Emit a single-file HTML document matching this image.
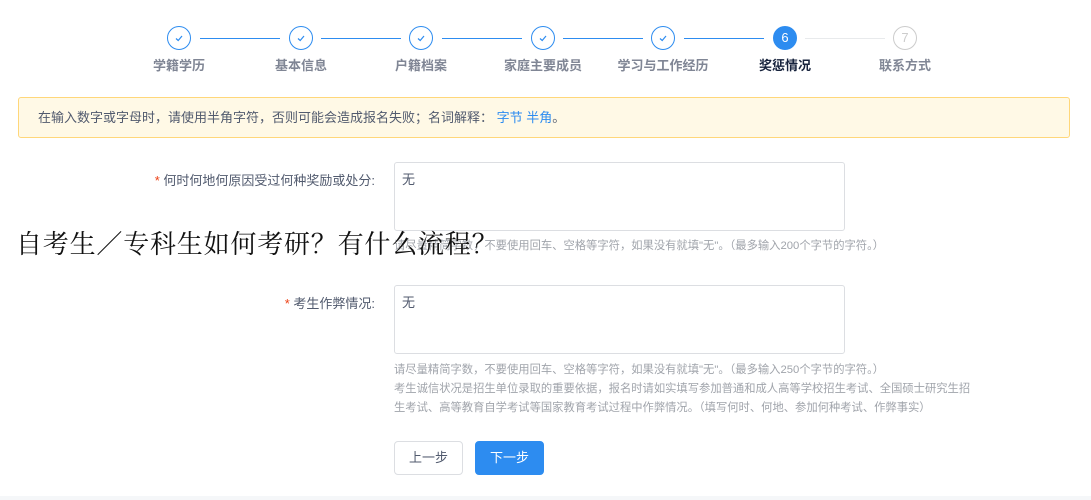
<!DOCTYPE html>
<html><head><meta charset="utf-8"><style>
*{margin:0;padding:0;box-sizing:border-box}
body{width:1091px;height:500px;background:#fff;position:relative;overflow:hidden;font-family:"Liberation Sans","Noto Sans CJK SC",sans-serif;color:#515a6e}
.a{position:absolute;white-space:nowrap}
.c{position:absolute;width:24px;height:24px;border-radius:50%;border:1px solid #2d8cf0;top:26px;color:#2d8cf0;font-size:13px;text-align:center;line-height:22px}
.c svg{position:absolute;left:6px;top:6px}
.ln{position:absolute;top:38px;height:1px;background:#2d8cf0}
.lb{position:absolute;top:55px;font-size:13px;color:#808695;width:120px;text-align:center}
.ta{position:absolute;left:394px;width:451px;border:1px solid #dcdee2;border-radius:3px;font-size:13px;padding:6px 7px;color:#515a6e}
.h{position:absolute;left:394px;font-size:11.3px;color:#a0a4ab;line-height:19px;white-space:nowrap}
.btn{position:absolute;top:441px;width:69px;height:34px;border-radius:4px;font-size:13px;text-align:center;line-height:32px}
</style></head><body>
<div class="c" style="left:167px"><svg width="10" height="10" viewBox="0 0 10 10"><path d="M2 5.5L4.2 7.5L8 3" fill="none" stroke="#2d8cf0" stroke-width="1.2"/></svg></div><div class="ln" style="left:200px;width:80px"></div>
<div class="c" style="left:289px"><svg width="10" height="10" viewBox="0 0 10 10"><path d="M2 5.5L4.2 7.5L8 3" fill="none" stroke="#2d8cf0" stroke-width="1.2"/></svg></div><div class="ln" style="left:321px;width:80px"></div>
<div class="c" style="left:409px"><svg width="10" height="10" viewBox="0 0 10 10"><path d="M2 5.5L4.2 7.5L8 3" fill="none" stroke="#2d8cf0" stroke-width="1.2"/></svg></div><div class="ln" style="left:442px;width:80px"></div>
<div class="c" style="left:531px"><svg width="10" height="10" viewBox="0 0 10 10"><path d="M2 5.5L4.2 7.5L8 3" fill="none" stroke="#2d8cf0" stroke-width="1.2"/></svg></div><div class="ln" style="left:563px;width:80px"></div>
<div class="c" style="left:651px"><svg width="10" height="10" viewBox="0 0 10 10"><path d="M2 5.5L4.2 7.5L8 3" fill="none" stroke="#2d8cf0" stroke-width="1.2"/></svg></div><div class="ln" style="left:684px;width:80px"></div>
<div class="c" style="left:773px;background:#2d8cf0;color:#fff">6</div><div class="ln" style="left:805px;width:80px;background:#e8eaec"></div>
<div class="c" style="left:893px;border-color:#ccc;color:#ccc">7</div>
<div class="lb" style="left:119px;font-weight:bold">学籍学历</div>
<div class="lb" style="left:241px;font-weight:bold">基本信息</div>
<div class="lb" style="left:361px;font-weight:bold">户籍档案</div>
<div class="lb" style="left:483px;font-weight:bold">家庭主要成员</div>
<div class="lb" style="left:603px;font-weight:bold">学习与工作经历</div>
<div class="lb" style="left:725px;color:#17233d;font-weight:bold">奖惩情况</div>
<div class="lb" style="left:845px;font-weight:bold">联系方式</div>
<div class="a" style="left:18px;top:97px;width:1052px;height:41px;background:#fff9e6;border:1px solid #ffd77a;border-radius:3px;font-size:13px;line-height:39px;padding-left:19px;color:#515a6e">在输入数字或字母时，请使用半角字符，否则可能会造成报名失败；名词解释： <span style="color:#2d8cf0">字节 半角</span>。</div>
<div class="a" style="right:716px;top:170px;font-size:13px"><span style="color:#ed4014">*</span> 何时何地何原因受过何种奖励或处分:</div>
<div class="ta" style="top:162px;height:69px">无</div>
<div class="h" style="top:237px">请尽量精简字数，不要使用回车、空格等字符，如果没有就填"无"。（最多输入200个字节的字符。）</div>
<div class="a" style="left:16px;top:224px;font-size:26px;color:#111;font-family:'Noto Serif CJK SC',serif;letter-spacing:0.8px">自考生／专科生如何考研？有什么流程？</div>
<div class="a" style="right:716px;top:293px;font-size:13px"><span style="color:#ed4014">*</span> 考生作弊情况:</div>
<div class="ta" style="top:285px;height:69px">无</div>
<div class="h" style="top:361px">请尽量精简字数，不要使用回车、空格等字符，如果没有就填"无"。（最多输入250个字节的字符。）<br>考生诚信状况是招生单位录取的重要依据，报名时请如实填写参加普通和成人高等学校招生考试、全国硕士研究生招<br>生考试、高等教育自学考试等国家教育考试过程中作弊情况。（填写何时、何地、参加何种考试、作弊事实）</div>
<div class="btn" style="left:394px;border:1px solid #dcdee2;color:#515a6e">上一步</div>
<div class="btn" style="left:475px;background:#2d8cf0;color:#fff;border:1px solid #2d8cf0">下一步</div>
<div class="a" style="left:0;top:496px;width:1091px;height:4px;background:#f5f7f9"></div>
</body></html>
